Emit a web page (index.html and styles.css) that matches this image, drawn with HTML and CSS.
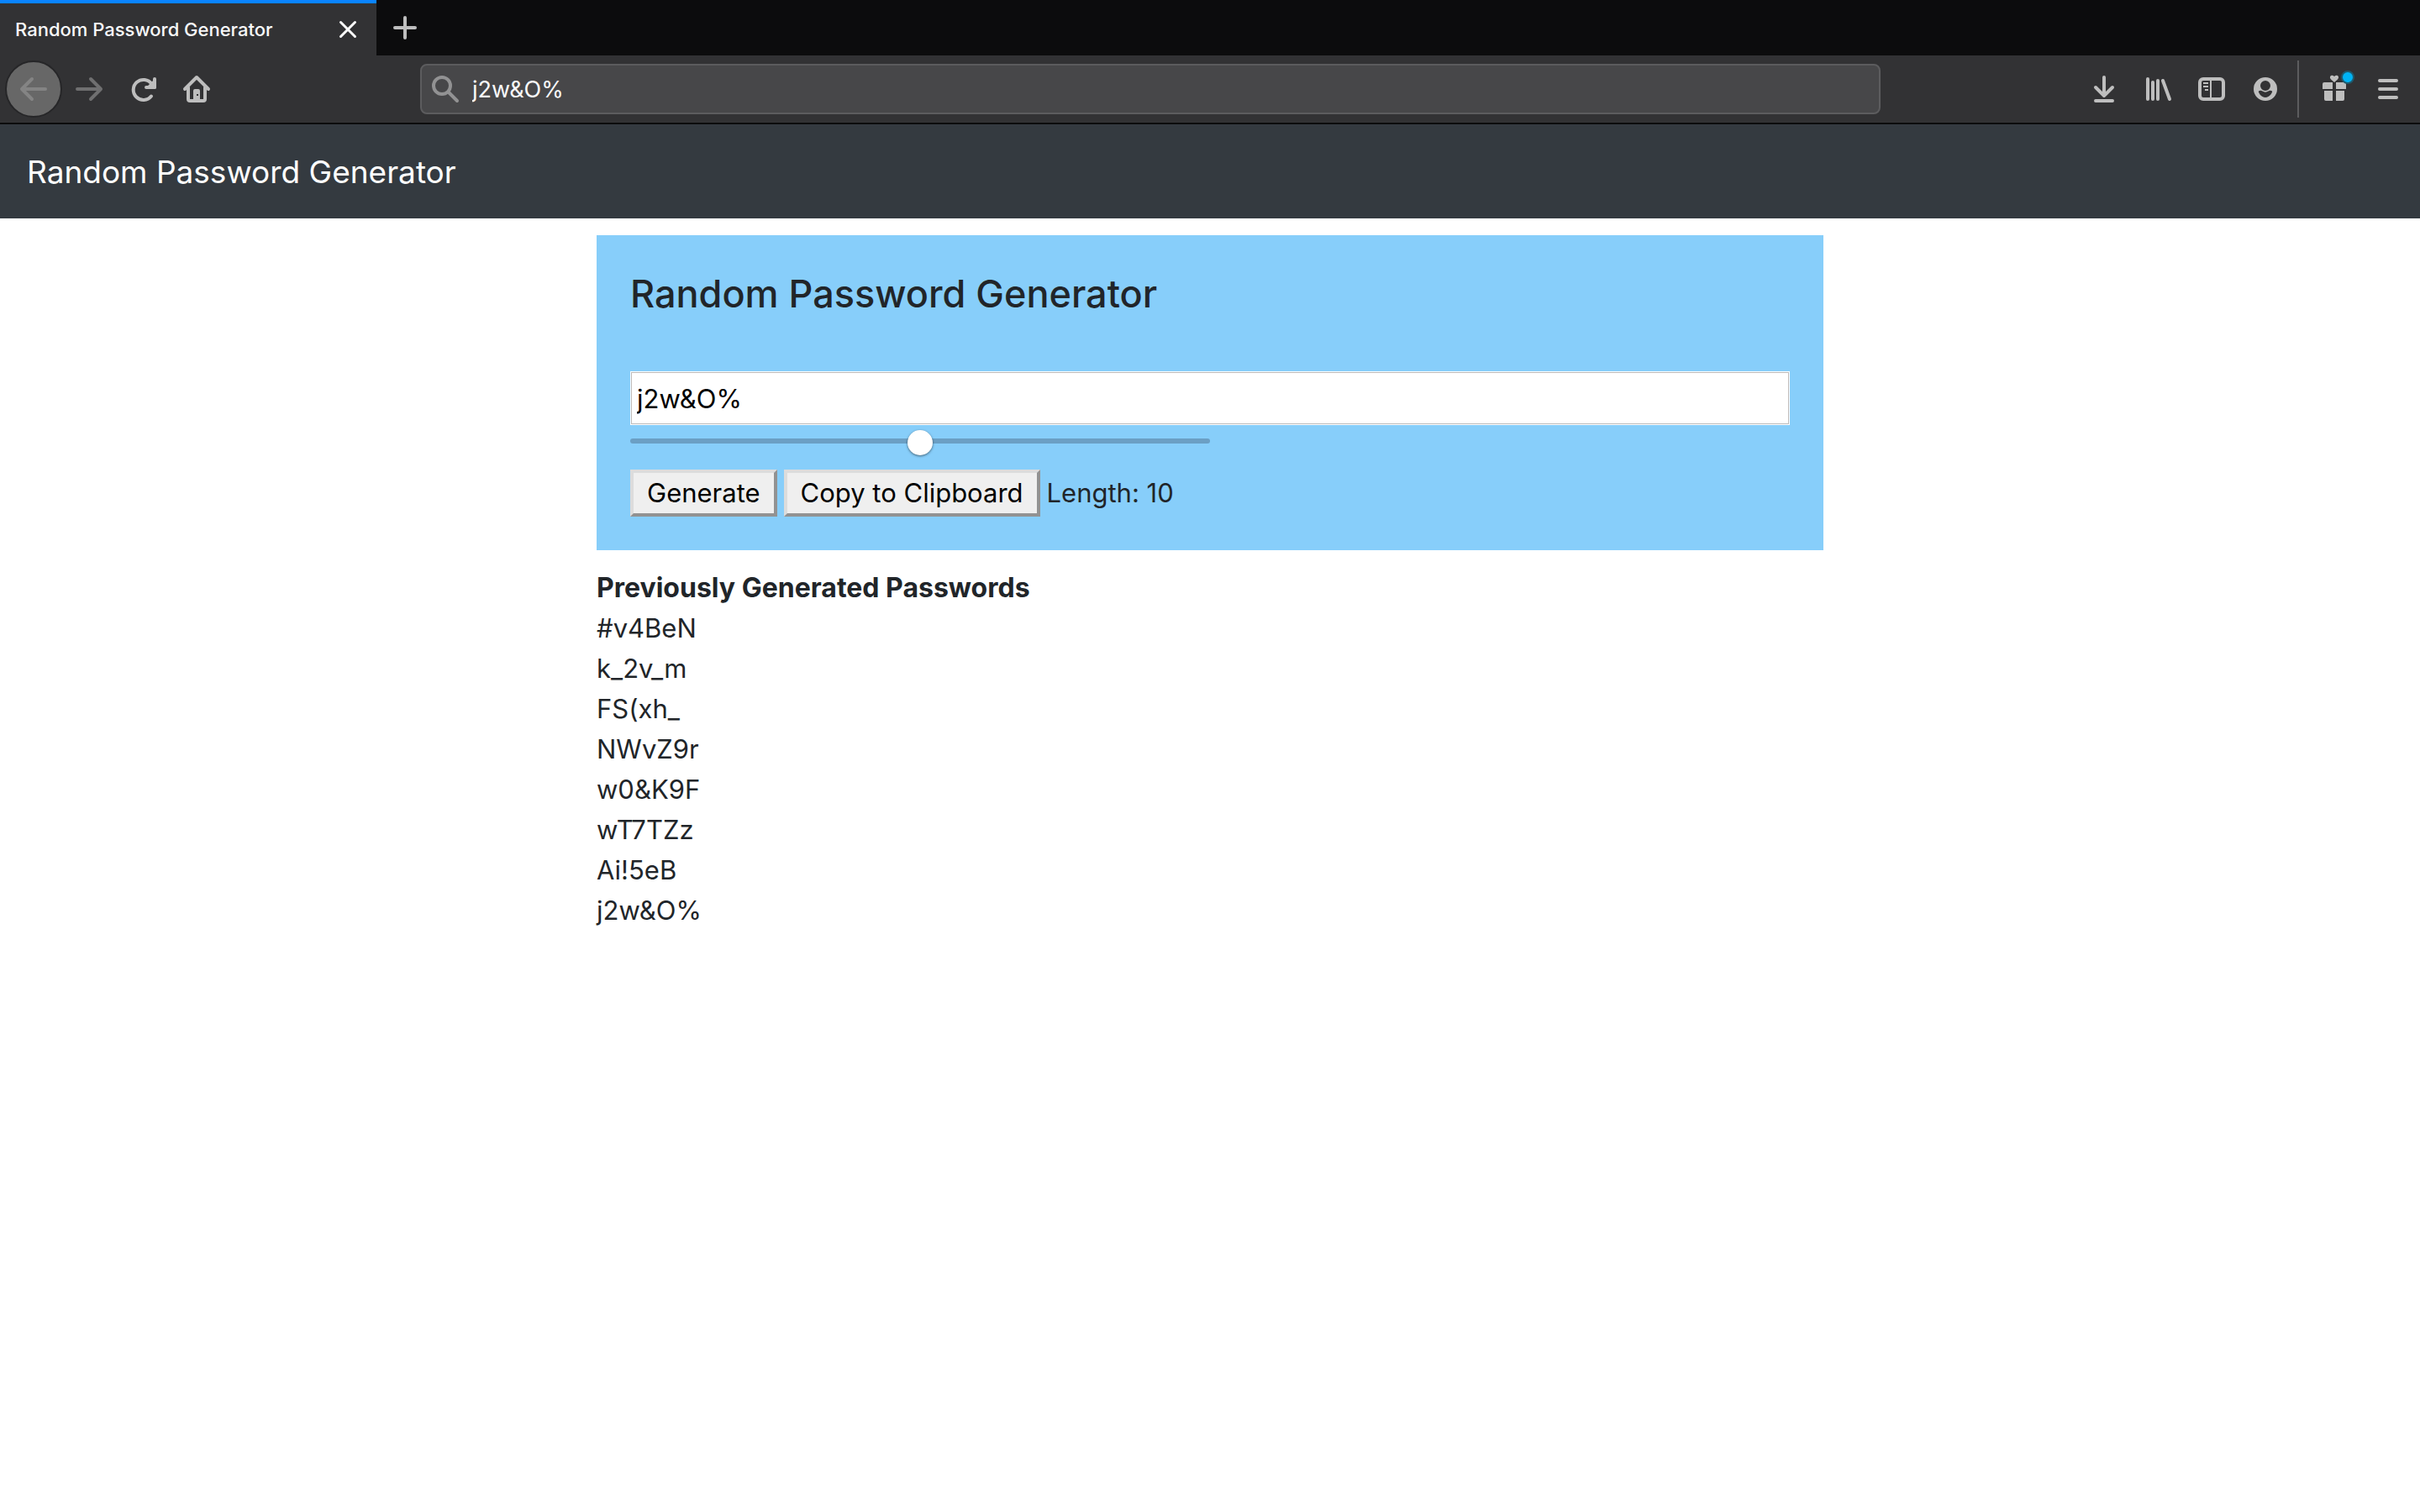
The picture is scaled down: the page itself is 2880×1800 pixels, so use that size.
FILE: index.html
```
<!DOCTYPE html>
<html lang="en">
<head>
<meta charset="utf-8">
<meta name="viewport" content="width=device-width, initial-scale=1">
<title>Random Password Generator</title>
<link rel="stylesheet" href="styles.css">
</head>
<body>
<header class="browser">
  <div class="tabs">
    <div class="tab">
      <span class="tab-title">Random Password Generator</span>
      <button class="tab-close" type="button" aria-label="Close tab">
        <svg class="icon icon-white" viewBox="0 0 32 32"><path d="M7.500 7.500l17 17M24.500 7.500l-17 17" stroke-width="3"/></svg>
      </button>
    </div>
    <button class="tab-new" type="button" aria-label="New tab">
      <svg class="icon" viewBox="0 0 32 32"><path d="M16 4v24M4 16h24" stroke-width="4"/></svg>
    </button>
  </div>
  <div class="toolbar">
    <nav class="tools" aria-label="Navigation">
      <button class="tool tool-back" type="button" aria-label="Back">
        <svg class="icon" viewBox="0 0 32 32"><path d="M30 16H3M14 4L2 16l12 12"/></svg>
      </button>
      <button class="tool tool-off" type="button" aria-label="Forward">
        <svg class="icon" viewBox="0 0 32 32"><path d="M2 16h27M18 4l12 12-12 12"/></svg>
      </button>
      <button class="tool" type="button" aria-label="Reload">
        <svg class="icon" viewBox="0 0 32 32"><path d="M26 24.500A12 12 0 1 1 26.500 10M30 4v10H20"/><path class="solid" d="M30 7v7h-7z"/></svg>
      </button>
      <button class="tool" type="button" aria-label="Home">
        <svg class="icon" viewBox="0 0 32 32"><path d="M2 16L16 2l14 14M6 14v14q0 2 2 2h16q2 0 2-2V14"/><path class="fill" d="M12 30V18q0-2 2-2h4q2 0 2 2v12zM16 22v2h2v-2z" fill-rule="evenodd"/></svg>
      </button>
    </nav>
    <label class="address">
      <svg class="icon" viewBox="0 0 32 32"><circle cx="12" cy="12" r="10"/><path d="M19.500 19.500L30 30"/></svg>
      <input class="address-input" type="text" value="j2w&amp;O%" aria-label="Search or enter address">
    </label>
    <div class="tools">
      <button class="tool" type="button" aria-label="Downloads">
        <svg class="icon" viewBox="0 0 32 32"><path d="M16 2v22M6 14l10 10 10-10M6 30h20"/></svg>
      </button>
      <button class="tool" type="button" aria-label="Library">
        <svg class="icon" viewBox="0 0 32 32"><path d="M4 4v24M10 8v20M16 6v22M22 6l8 22"/></svg>
      </button>
      <button class="tool" type="button" aria-label="Sidebars">
        <svg class="icon" viewBox="0 0 32 32"><rect x="2" y="4" width="28" height="24" rx="4"/><path d="M15 5v22M6 9h6M6 13h6M8 17h4" stroke-width="2" stroke-linecap="butt"/></svg>
      </button>
      <button class="tool" type="button" aria-label="Account">
        <svg class="icon" viewBox="0 0 32 32"><path class="fill" fill-rule="evenodd" d="M16 2a14 14 0 1 0 0 28a14 14 0 1 0 0-28zM16 6a6 6 0 0 1 0 12a6 6 0 0 1 0-12zM8 18.500c1.500-1 3-1 4.500 0c2 1.500 5 1.500 7 0c1.500-1 3-1 4.500 0c1 1-3 7.500-8 7.500s-9-6.500-8-7.500z"/></svg>
      </button>
      <span class="divider"></span>
      <button class="tool" type="button" aria-label="What's new">
        <svg class="icon" viewBox="0 0 32 32"><path class="fill" d="M4 8h10v8H2v-6q0-2 2-2zM18 8h10q2 0 2 2v6H18zM4 18h10v12H6q-2 0-2-2zM18 18h10v10q0 2-2 2h-8zM16 8l-4-3.500C9 1 13-2 16 1c3-3 7 0 4 3.500z"/></svg>
        <span class="dot"></span>
      </button>
      <button class="tool" type="button" aria-label="Menu">
        <svg class="icon" viewBox="0 0 32 32"><path d="M6 6h20M6 16h20M6 26h20"/></svg>
      </button>
    </div>
  </div>
</header>
<div class="navbar"><a class="brand" href="#">Random Password Generator</a></div>
<main class="content">
  <section class="panel">
    <h1 class="title">Random Password Generator</h1>
    <input class="password" type="text" value="j2w&amp;O%" aria-label="Password">
    <input class="length" id="length" type="range" min="0" max="20" value="10">
    <div class="actions">
      <button class="action" type="button">Generate</button>
      <button class="action" type="button">Copy to Clipboard</button>
      <label for="length">Length: 10</label>
    </div>
  </section>
  <section class="history">
    <h2 class="history-title">Previously Generated Passwords</h2>
    <ul class="history-list">
      <li>#v4BeN</li>
      <li>k_2v_m</li>
      <li>FS(xh_</li>
      <li>NWvZ9r</li>
      <li>w0&amp;K9F</li>
      <li>wT7TZz</li>
      <li>Ai!5eB</li>
      <li>j2w&amp;O%</li>
    </ul>
  </section>
</main>
</body>
</html>
```
FILE: styles.css
```
* { box-sizing: border-box; }
body {
  margin: 0;
  background: #fff;
  color: #212529;
  font: 31px/48px Inter, "Liberation Sans", sans-serif;
}
button, input { margin: 0; font: inherit; }
h1, h2, ul { margin: 0; padding: 0; }

.icon {
  display: block;
  flex: none;
  width: 32px;
  height: 32px;
  fill: none;
  stroke: #bebebe;
  stroke-width: 4;
  stroke-linecap: round;
  stroke-linejoin: round;
  overflow: visible;
}
.icon .fill { fill: #bebebe; stroke: none; }
.icon .solid { fill: #bebebe; }
.icon-white { stroke: #fff; }

.tabs { display: flex; height: 66px; background: #0c0c0d; }
.tab {
  display: flex;
  align-items: center;
  justify-content: space-between;
  width: 448px;
  padding: 0 18px;
  border-top: 4px solid #0a84ff;
  background: #323234;
  color: #f9f9fa;
  font-size: 22px;
  font-weight: 500;
}
.tab-close, .tab-new, .tool {
  display: flex;
  align-items: center;
  justify-content: center;
  padding: 0;
  border: 0;
  background: none;
}
.tab-new { width: 68px; }

.toolbar {
  display: flex;
  align-items: center;
  height: 82px;
  padding: 0 6px;
  border-bottom: 2px solid #0c0c0d;
  background: #323234;
}
.tools { display: flex; align-items: center; }
.tool { position: relative; width: 64px; height: 68px; }
.tool-back {
  width: 68px;
  border: 2px solid #262628;
  border-radius: 50%;
  background: #676767;
}
.tool-back .icon { stroke: #848484; }
.tool-off .icon { stroke: #6f6f70; }
.divider { width: 2px; height: 68px; margin: 0 10px 0 6px; background: #5c5c5e; }
.dot {
  position: absolute;
  top: 12px;
  right: 8px;
  width: 16px;
  height: 16px;
  border: 2px solid #1f5a6e;
  border-radius: 50%;
  background: #00b3f4;
}
.address {
  display: flex;
  flex: 1;
  align-items: center;
  gap: 16px;
  height: 60px;
  margin: 0 234px;
  padding: 0 12px;
  border: 2px solid #5c5c5e;
  border-radius: 8px;
  background: #474749;
}
.address .icon { stroke: #929293; }
.address-input {
  flex: 1;
  min-width: 0;
  padding: 2px 0 0;
  border: 0;
  background: none;
  color: #f9f9fa;
  font-size: 27px;
}

.navbar { display: flex; padding: 27px 32px 25px; background: #343a40; line-height: 60px; }
.brand { color: #fff; font-size: 37px; text-decoration: none; }

.content { width: 1460px; max-width: 100%; margin: 20px auto; }
.panel { padding: 40px; background: #87cefa; }
.title { margin-bottom: 62px; font-size: 45px; font-weight: 500; line-height: 60px; }
.password {
  display: block;
  width: 100%;
  height: 64px;
  padding: 0 7px;
  border: 1px solid #fff;
  outline: 1px solid #bbb;
  outline-offset: -2px;
  background: #fff;
  color: #000;
}
.length {
  display: block;
  width: 50%;
  height: 30px;
  margin: 4px 0 19px;
  appearance: none;
  background: none;
}
.length::-webkit-slider-runnable-track { height: 6px; border-radius: 3px; background: #6b9fc4; }
.length::-webkit-slider-thumb {
  width: 30px;
  height: 30px;
  margin-top: -10px;
  appearance: none;
  border-radius: 50%;
  background: #fff;
  box-shadow: 0 1px 3px #0008;
}
.actions { display: flex; align-items: center; gap: 8px; }
.action {
  height: 56px;
  padding: 0 16px;
  border: 4px solid;
  border-color: #dcdcdc #929292 #929292 #dcdcdc;
  background: #efefef;
  color: #000;
  line-height: 48px;
}
.history { margin-top: 21px; }
.history-title { font-size: 32px; font-weight: 700; line-height: 48px; }
.history-list { list-style: none; }
```
